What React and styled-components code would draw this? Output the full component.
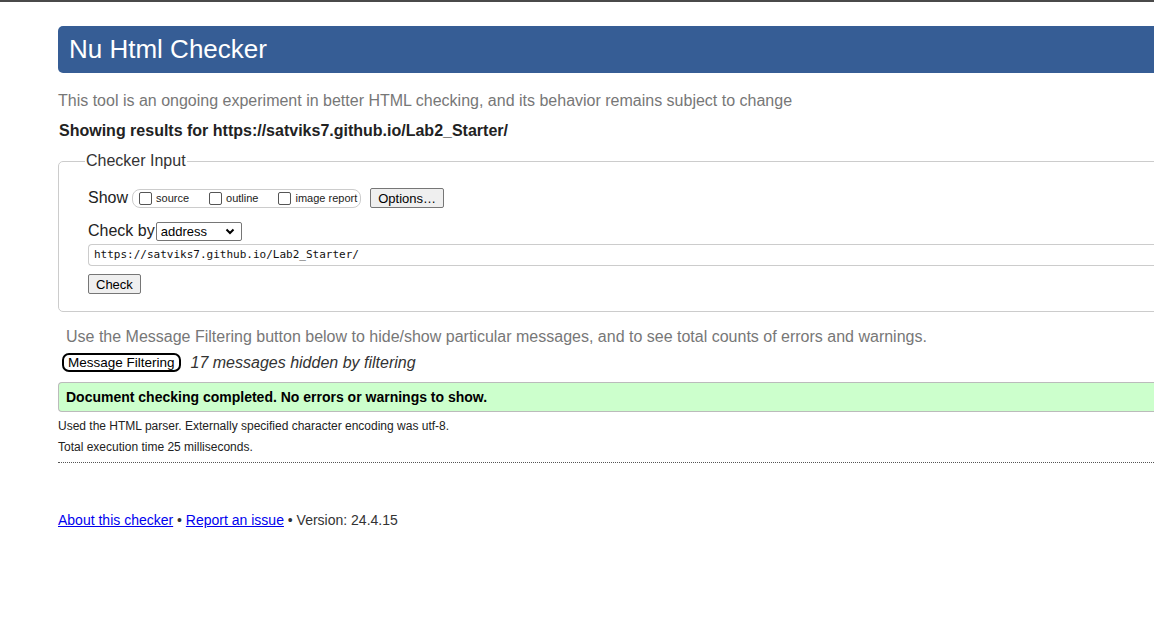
import React from 'react';
import styled, { createGlobalStyle } from 'styled-components';

const Global = createGlobalStyle`
  html, body {
    margin: 0;
    padding: 0;
    background: #fff;
    overflow: hidden;
    font-family: "Liberation Sans", Arial, sans-serif;
  }
`;

const TopBar = styled.div`
  height: 2px;
  background: #4a4a4a;
`;

const Page = styled.div`
  margin-left: 58px;
  margin-right: -60px;
  padding-top: 24px;
`;

const Header = styled.h1`
  margin: 0;
  height: 47px;
  box-sizing: border-box;
  background: #365d95;
  border-radius: 5px;
  color: #fff;
  font-weight: normal;
  font-size: 26px;
  line-height: 47px;
  padding-left: 11px;
`;

const Tagline = styled.p`
  margin: 18px 0 0;
  font-size: 16px;
  line-height: 20px;
  color: #777;
`;

const Showing = styled.p`
  margin: 10px 0 0 1px;
  font-size: 16px;
  line-height: 20px;
  font-weight: bold;
  color: #222;
`;

const Fieldset = styled.fieldset`
  margin: 11px 0 0;
  padding: 16px 0 17px 29px;
  border: 1px solid #ccc;
  border-radius: 5px;
`;

const Legend = styled.legend`
  font-size: 16px;
  color: #333;
  padding: 0 1px;
  margin-left: -3px;
`;

const Row = styled.div`
  display: flex;
  align-items: center;
  font-size: 16px;
  color: #222;
  height: 20px;
  margin-top: ${p => p.mt || 0}px;
`;

const Pill = styled.span`
  display: inline-flex;
  align-items: center;
  white-space: nowrap;
  height: 19px;
  box-sizing: border-box;
  border: 1px solid #ccc;
  border-radius: 8px;
  padding: 0 3px 0 6px;
  margin-left: 4px;
`;

const CheckItem = styled.label`
  display: inline-flex;
  align-items: center;
  font-size: 11px;
  color: #222;
  margin-right: ${p => p.gap || 0}px;
`;

const Box = styled.span`
  display: inline-block;
  width: 11px;
  height: 11px;
  border: 1px solid #555;
  border-radius: 2px;
  margin-right: 4px;
  background: #fff;
`;

const Button = styled.button`
  font-family: "Liberation Sans", Arial, sans-serif;
  font-size: 13px;
  color: #000;
  background: #efefef;
  border: 1px solid #767676;
  border-radius: 2px;
  height: 20px;
  padding: 0 ${p => p.px || 6}px;
  margin-left: ${p => p.ml || 0}px;
`;

const Select = styled.span`
  display: inline-flex;
  align-items: center;
  justify-content: space-between;
  box-sizing: border-box;
  width: 86px;
  height: 19px;
  border: 1px solid #767676;
  border-radius: 2px;
  margin-left: 1px;
  padding: 0 6px 0 4px;
  font-size: 13px;
  color: #000;
`;

const UrlInput = styled.div`
  margin-top: 3px;
  height: 22px;
  box-sizing: border-box;
  border: 1px solid #ccc;
  border-right: none;
  border-radius: 4px 0 0 4px;
  font-family: "DejaVu Sans Mono", "Liberation Mono", monospace;
  font-size: 11px;
  line-height: 20px;
  padding-left: 5px;
  color: #111;
`;

const Hint = styled.p`
  margin: 15px 0 0 8px;
  font-size: 16px;
  line-height: 20px;
  color: #777;
`;

const FilterRow = styled.div`
  display: flex;
  align-items: center;
  margin-top: 6px;
  margin-left: 4px;
`;

const FilterButton = styled.button`
  font-family: "Liberation Sans", Arial, sans-serif;
  font-size: 13.5px;
  color: #000;
  background: #fff;
  border: 2px solid #000;
  border-radius: 7px;
  height: 19px;
  padding: 0 4px;
  line-height: 14px;
`;

const Hidden = styled.span`
  margin-left: 10px;
  font-size: 16px;
  font-style: italic;
  color: #333;
`;

const Success = styled.div`
  margin-top: 10px;
  height: 30px;
  box-sizing: border-box;
  background: #ccffcc;
  border: 1px solid #bbb;
  border-right: none;
  border-radius: 4px 0 0 4px;
  padding-left: 7px;
  font-size: 14px;
  font-weight: bold;
  line-height: 28px;
  color: #000;
`;

const Detail = styled.p`
  margin: ${p => p.mt || 0}px 0 0;
  font-size: 12px;
  line-height: 21px;
  color: #222;
`;

const Dotted = styled.div`
  margin-top: 4px;
  border-top: 1px dotted #555;
`;

const Footer = styled.p`
  margin: 47px 0 0;
  font-size: 14px;
  line-height: 20px;
  color: #333;
`;

const Link = styled.a`
  color: #0000ee;
  text-decoration: underline;
`;

const Chevron = () => (
  <svg width="10" height="7" viewBox="0 0 10 7">
    <path d="M1.5 1.5 L5 5 L8.5 1.5" fill="none" stroke="#000" strokeWidth="2" />
  </svg>
);

export default function App() {
  return (
    <>
      <Global />
      <TopBar />
      <Page>
        <Header>Nu Html Checker</Header>
        <Tagline>This tool is an ongoing experiment in better HTML checking, and its behavior remains subject to change</Tagline>
        <Showing>Showing results for https://satviks7.github.io/Lab2_Starter/</Showing>
        <Fieldset>
          <Legend>Checker Input</Legend>
          <Row mt={2}>
            Show
            <Pill>
              <CheckItem gap={20}><Box />source</CheckItem>
              <CheckItem gap={20}><Box />outline</CheckItem>
              <CheckItem><Box />image report</CheckItem>
            </Pill>
            <Button ml={9} px={7}>Options…</Button>
          </Row>
          <Row mt={13}>
            Check by
            <Select>address<Chevron /></Select>
          </Row>
          <UrlInput>https://satviks7.github.io/Lab2_Starter/</UrlInput>
          <Row mt={8}>
            <Button px={7}>Check</Button>
          </Row>
        </Fieldset>
        <Hint>Use the Message Filtering button below to hide/show particular messages, and to see total counts of errors and warnings.</Hint>
        <FilterRow>
          <FilterButton>Message Filtering</FilterButton>
          <Hidden>17 messages hidden by filtering</Hidden>
        </FilterRow>
        <Success>Document checking completed. No errors or warnings to show.</Success>
        <Detail mt={4}>Used the HTML parser. Externally specified character encoding was utf-8.</Detail>
        <Detail>Total execution time 25 milliseconds.</Detail>
        <Dotted />
        <Footer>
          <Link href="#">About this checker</Link> • <Link href="#">Report an issue</Link> • Version: 24.4.15
        </Footer>
      </Page>
    </>
  );
}
